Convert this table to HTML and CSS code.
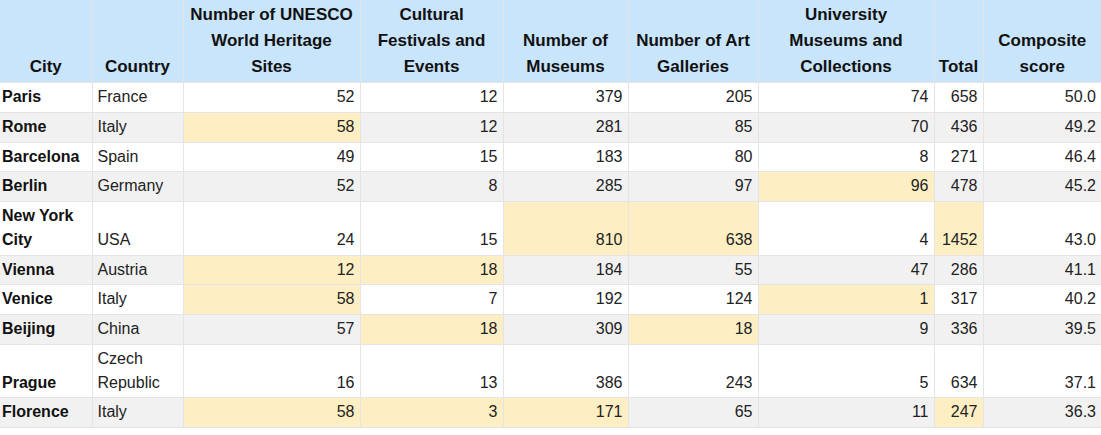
FILE: index.html
```html
<!DOCTYPE html>
<html>
<head>
<meta charset="utf-8">
<link rel="stylesheet" href="styles.css">
</head>
<body>
<table class="data">
  <colgroup>
    <col class="c-city"><col class="c-country"><col class="c-unesco"><col class="c-fest"><col class="c-mus"><col class="c-gal"><col class="c-uni"><col class="c-total"><col class="c-comp">
  </colgroup>
  <thead>
    <tr>
      <th>City</th>
      <th>Country</th>
      <th>Number of UNESCO<br>World Heritage<br>Sites</th>
      <th>Cultural<br>Festivals and<br>Events</th>
      <th>Number of<br>Museums</th>
      <th>Number of Art<br>Galleries</th>
      <th>University<br>Museums and<br>Collections</th>
      <th>Total</th>
      <th>Composite<br>score</th>
    </tr>
  </thead>
  <tbody>
    <tr><td class="city">Paris</td><td>France</td><td class="num">52</td><td class="num">12</td><td class="num">379</td><td class="num">205</td><td class="num">74</td><td class="num">658</td><td class="num">50.0</td></tr>
    <tr><td class="city">Rome</td><td>Italy</td><td class="num hl">58</td><td class="num">12</td><td class="num">281</td><td class="num">85</td><td class="num">70</td><td class="num">436</td><td class="num">49.2</td></tr>
    <tr><td class="city">Barcelona</td><td>Spain</td><td class="num">49</td><td class="num">15</td><td class="num">183</td><td class="num">80</td><td class="num">8</td><td class="num">271</td><td class="num">46.4</td></tr>
    <tr><td class="city">Berlin</td><td>Germany</td><td class="num">52</td><td class="num">8</td><td class="num">285</td><td class="num">97</td><td class="num hl">96</td><td class="num">478</td><td class="num">45.2</td></tr>
    <tr><td class="city">New York City</td><td>USA</td><td class="num">24</td><td class="num">15</td><td class="num hl">810</td><td class="num hl">638</td><td class="num">4</td><td class="num hl">1452</td><td class="num">43.0</td></tr>
    <tr><td class="city">Vienna</td><td>Austria</td><td class="num hl">12</td><td class="num hl">18</td><td class="num">184</td><td class="num">55</td><td class="num">47</td><td class="num">286</td><td class="num">41.1</td></tr>
    <tr><td class="city">Venice</td><td>Italy</td><td class="num hl">58</td><td class="num">7</td><td class="num">192</td><td class="num">124</td><td class="num hl">1</td><td class="num">317</td><td class="num">40.2</td></tr>
    <tr><td class="city">Beijing</td><td>China</td><td class="num">57</td><td class="num hl">18</td><td class="num">309</td><td class="num hl">18</td><td class="num">9</td><td class="num">336</td><td class="num">39.5</td></tr>
    <tr><td class="city">Prague</td><td>Czech Republic</td><td class="num">16</td><td class="num">13</td><td class="num">386</td><td class="num">243</td><td class="num">5</td><td class="num">634</td><td class="num">37.1</td></tr>
    <tr><td class="city">Florence</td><td>Italy</td><td class="num hl">58</td><td class="num hl">3</td><td class="num hl">171</td><td class="num">65</td><td class="num">11</td><td class="num hl">247</td><td class="num">36.3</td></tr>
  </tbody>
</table>
</body>
</html>
```
FILE: styles.css
```css
html, body {
  margin: 0;
  padding: 0;
  background: #ffffff;
}

.data {
  width: 1101px;
  border-collapse: collapse;
  table-layout: fixed;
  font-family: "Liberation Sans", Arial, sans-serif;
  font-size: 16px;
  color: #222222;
}

.c-city { width: 92px; }
.c-country { width: 91px; }
.c-unesco { width: 177px; }
.c-fest { width: 143px; }
.c-mus { width: 125px; }
.c-gal { width: 130px; }
.c-uni { width: 176px; }
.c-total { width: 49px; }
.c-comp { width: 118px; }

.data th,
.data td {
  border: 1px solid #e4e4e4;
  padding: 2px 5px 3px 5px;
  vertical-align: bottom;
}

.data th {
  background: #c9e5fb;
  color: #111111;
  font-size: 17px;
  font-weight: bold;
  text-align: center;
  line-height: 26px;
  padding: 2px 2px 2px 2px;
  white-space: nowrap;
}

.data th:first-child,
.data td:first-child {
  border-left: none;
  padding-left: 2px;
}

.data th:last-child,
.data td:last-child {
  border-right: none;
}

.data thead th {
  border-top: none;
}

.data td {
  line-height: 23.75px;
  text-align: left;
}

.data tbody tr:nth-child(even) td {
  background: #f1f1f1;
}

.data td.city {
  font-weight: bold;
  color: #111111;
}

.data td.num {
  text-align: right;
}

.data tbody tr td.hl {
  background: #fdefc3;
}
```
